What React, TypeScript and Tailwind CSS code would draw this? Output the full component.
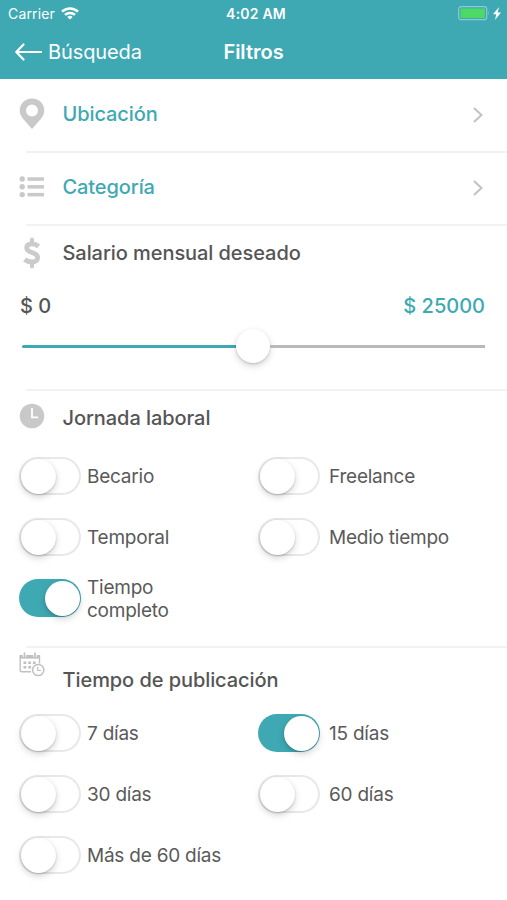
import { useState } from "react";

type Option = { label: string; initial?: boolean; narrow?: boolean };

const WORKDAY: Option[] = [
  { label: "Becario" },
  { label: "Freelance" },
  { label: "Temporal" },
  { label: "Medio tiempo" },
  { label: "Tiempo completo", initial: true, narrow: true },
];

const PUBLISHED: Option[] = [
  { label: "7 días" },
  { label: "15 días", initial: true },
  { label: "30 días" },
  { label: "60 días" },
  { label: "Más de 60 días" },
];

function Toggle({ option, labelGap }: { option: Option; labelGap: string }) {
  const [on, setOn] = useState(!!option.initial);
  return (
    <div className="flex h-[61px] items-center">
      <button
        role="switch"
        aria-checked={on}
        aria-label={option.label}
        onClick={() => setOn(!on)}
        className={`mt-px flex h-[38px] w-[62px] shrink-0 items-center rounded-full px-[1.5px] ${
          on ? "justify-end bg-[#3ea9b3]" : "justify-start bg-white shadow-[inset_0_0_0_2px_#e8e8e8]"
        }`}
      >
        <span className="size-[35px] rounded-full bg-white shadow-[0_3px_7px_rgba(0,0,0,0.17),0_1px_2px_rgba(0,0,0,0.16)]" />
      </button>
      <span className={`pt-[2px] text-[19px] leading-[23px] tracking-[-0.23px] text-[#5a5a5a] ${labelGap}`}>
        <span className={option.narrow ? "block w-[100px]" : "block"}>{option.label}</span>
      </span>
    </div>
  );
}

function ToggleGrid({ options }: { options: Option[] }) {
  return (
    <div className="grid grid-cols-[239px_239px] pl-[19px]">
      {options.map((o, i) => (
        <Toggle key={o.label} option={o} labelGap={i % 2 ? "ml-[9px]" : "ml-[6px]"} />
      ))}
    </div>
  );
}

function Divider() {
  return <div className="ml-[26px] h-[2px] shrink-0 bg-[#f2f2f2]" />;
}

function Chevron() {
  return (
    <svg width="12" height="18" viewBox="0 0 12 18" fill="none" stroke="#c2c2c4" strokeWidth="2" className="mr-[23px] mt-[2px]">
      <path d="M2 2l7.500 7L2 16" />
    </svg>
  );
}

function PinIcon() {
  return (
    <svg width="26" height="32" viewBox="0 0 26 32" fill="#c9c9c9">
      <path fillRule="evenodd" d="M13 .5C6 .5.7 5.900.7 12.500c0 3 1.200 5.700 3.300 8.200L13 31l9-10.300c2.100-2.500 3.300-5.200 3.300-8.200C25.300 5.900 20 .5 13 .5Zm0 6a6 6 0 1 1 0 12 6 6 0 0 1 0-12Z" />
    </svg>
  );
}

function ListIcon() {
  return (
    <svg width="26" height="22" viewBox="0 0 26 22" fill="#c9c9c9">
      {[3, 10.8, 18.6].map((y) => (
        <g key={y}>
          <circle cx="3.200" cy={y} r="2.700" />
          <rect x="8.500" y={y - 1.7} width="16.500" height="3.500" />
        </g>
      ))}
    </svg>
  );
}

function DollarIcon() {
  return (
    <svg width="18" height="32" viewBox="0 0 18 32" fill="none" stroke="#cbcbcb">
      <path strokeWidth="4.800" d="M15.600 9.400C13.500 7.600 11.500 6.900 9 6.900c-3.400 0-5.300 1.500-5.300 4 0 5.500 11 3.800 11 9.600 0 3-2.400 4.500-5.700 4.500-3 0-5.200-.8-7.400-2.500" />
      <path strokeWidth="4" strokeLinecap="round" d="M9 2.500v4M9 25v4.500" />
    </svg>
  );
}

function ClockIcon() {
  return (
    <svg width="26" height="26" viewBox="0 0 26 26">
      <circle cx="13" cy="13" r="12.300" fill="#c9c9c9" />
      <path d="M13 5v9.300h6" fill="none" stroke="#fff" strokeWidth="1.800" />
    </svg>
  );
}

function CalendarIcon() {
  return (
    <svg width="26" height="25" viewBox="0 0 26 25" fill="none" stroke="#c0c0c0">
      <path strokeWidth="1.400" d="M12 19.700H2.700Q1.200 19.700 1.200 18.200V4h19.300v7.500" />
      <path strokeWidth="3.600" d="M.8 4.800h20" />
      <path stroke="#fff" strokeWidth="3.400" d="M5.500 1v4M16 1v4" />
      <path strokeWidth="1.700" d="M5.500.5V5M16 .5V5" />
      <path strokeWidth="2.600" strokeDasharray="2.800 1.900" d="M4.500 10.700h12.500M4.500 15.200h7.500" />
      <circle cx="19.200" cy="18" r="5.600" fill="#fff" strokeWidth="1.500" />
      <path strokeWidth="1.200" d="M18.700 14.800v3.700h3.300" />
    </svg>
  );
}

function LinkRow({ icon, label }: { icon: React.ReactNode; label: string }) {
  return (
    <button className="flex h-[71px] w-full items-center pb-[3px] text-left">
      <span className="flex w-[62.500px] justify-center pl-px">{icon}</span>
      <span className="flex-1 pb-[1px] text-[20px] font-medium leading-6 tracking-[-0.1px] text-[#3ea9b3]">{label}</span>
      <Chevron />
    </button>
  );
}

export default function App() {
  return (
    <main className="flex h-[900px] w-[507px] flex-col overflow-hidden bg-white font-['Inter',sans-serif]">
      <header className="h-[79px] shrink-0 bg-[#3ea9b3] text-white">
        <div className="grid h-[27px] grid-cols-3 items-center">
          <div className="flex items-center gap-[6px] pl-[8px] text-[14px] tracking-[0.15px]">
            <span>Carrier</span>
            <svg width="18" height="13" viewBox="0 0 18 13" fill="none" stroke="#fff" strokeWidth="2.500">
              <path d="M1 4.700a11.500 11.500 0 0 1 16 0M4 7.900a7.200 7.200 0 0 1 10 0" />
              <path d="M9 12.600 6.300 9.900a4 4 0 0 1 5.400 0Z" fill="#fff" stroke="none" />
            </svg>
          </div>
          <div className="pl-[5px] text-center text-[14px] font-semibold tracking-[0.2px]">4:02 AM</div>
          <div className="flex items-center justify-end pr-[5px]">
            <svg width="44" height="15" viewBox="0 0 44 15">
              <rect x=".7" y=".7" width="28" height="13" rx="2.500" fill="none" stroke="#8ccbd1" strokeWidth="1.200" />
              <rect x="2.500" y="2.500" width="24.400" height="9.400" rx="1" fill="#4cd964" />
              <path d="M30 5q1.700 2.200 0 4.400Z" fill="#8ccbd1" />
              <path d="M41 1 35 8.200h3.300L37 14l6-7.500h-3.300Z" fill="#fff" />
            </svg>
          </div>
        </div>
        <div className="grid h-[50px] grid-cols-3 items-center">
          <button className="flex items-center gap-[6px] pl-[15px] text-[20px] leading-6 tracking-[-0.1px]">
            <svg width="27" height="20" viewBox="0 0 27 20" fill="none" stroke="#fff" strokeWidth="2.200" strokeLinecap="round" strokeLinejoin="round">
              <path d="M26 10H1.500M8.500 2.500 1.300 10l7.200 7.500" />
            </svg>
            <span>Búsqueda</span>
          </button>
          <h1 className="text-center text-[20px] font-semibold leading-6">Filtros</h1>
        </div>
      </header>

      <div className="pt-[1px]">
        <LinkRow icon={<PinIcon />} label="Ubicación" />
      </div>
      <Divider />
      <LinkRow icon={<ListIcon />} label="Categoría" />
      <Divider />

      <section className="h-[163px] shrink-0">
        <div className="flex h-[54px] items-center">
          <span className="flex w-[62.500px] justify-center pl-px">
            <DollarIcon />
          </span>
          <h2 className="text-[20px] font-[450] leading-6 tracking-[-0.07px] text-[#555]">Salario mensual deseado</h2>
        </div>
        <div className="flex h-[52px] items-center justify-between pl-[20px] pr-[22px] text-[20px] leading-6">
          <span className="font-[450] text-[#555]">$ 0</span>
          <span className="font-medium text-[#3ea9b3]">$ 25000</span>
        </div>
        <div className="mx-[22px] -mt-[3px] flex h-[34px] items-center">
          <span className="h-[3px] w-[214px] rounded-l-full bg-[#3ea9b3]" />
          <span className="size-[34px] shrink-0 rounded-full bg-white shadow-[0_3px_7px_rgba(0,0,0,0.17),0_1px_2px_rgba(0,0,0,0.14)]" />
          <span className="h-[3px] flex-1 bg-[#b9b9bb]" />
        </div>
      </section>
      <Divider />

      <section className="h-[255px] shrink-0">
        <div className="flex h-[54px] items-center">
          <span className="flex w-[62.500px] justify-center pb-[4px] pl-px">
            <ClockIcon />
          </span>
          <h2 className="text-[20px] font-[450] leading-6 tracking-[-0.07px] text-[#555]">Jornada laboral</h2>
        </div>
        <ToggleGrid options={WORKDAY} />
      </section>
      <Divider />

      <section>
        <div className="flex h-[54px] items-start">
          <span className="flex w-[62.500px] justify-center pl-px pt-[4px]">
            <CalendarIcon />
          </span>
          <h2 className="pt-[20px] text-[20px] font-[450] leading-6 tracking-[-0.07px] text-[#555]">Tiempo de publicación</h2>
        </div>
        <ToggleGrid options={PUBLISHED} />
      </section>
    </main>
  );
}
